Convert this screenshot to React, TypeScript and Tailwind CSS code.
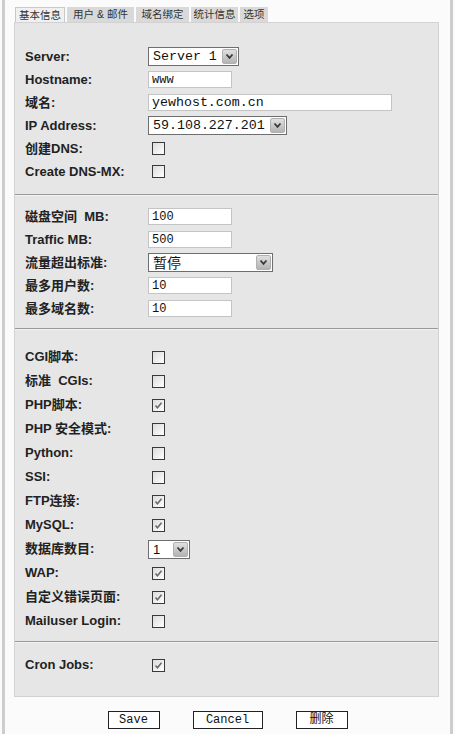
import React from "react"

const sans = "font-['Liberation_Sans','Noto_Sans_CJK_SC',sans-serif]"
const mono = "font-['Liberation_Mono','Noto_Sans_CJK_SC',monospace]"

const tabs: [string, string][] = [
  ["基本信息", "w-[50px]"],
  ["用户 & 邮件", "w-[67px]"],
  ["域名绑定", "w-[53px]"],
  ["统计信息", "w-[47px]"],
  ["选项", "w-[28px]"],
]

function Checkbox({ checked }: { checked?: boolean }) {
  return (
    <div className="ml-[4px] flex h-[13px] w-[13px] items-center justify-center border border-[#3a3a3a] bg-gradient-to-br from-[#dcdcdc] to-white">
      {checked && (
        <svg width="9" height="9" viewBox="0 0 9 9">
          <path d="M1.5 4.5 L3.5 6.8 L7.5 1.8" fill="none" stroke="#6a6a6a" strokeWidth="1.6" />
        </svg>
      )}
    </div>
  )
}

function Arrow() {
  return (
    <div className="flex h-[15px] w-[15px] items-center justify-center rounded-[2px] border border-[#b0b0b0] bg-gradient-to-b from-[#e0e0e0] to-[#b4b4b4]">
      <svg width="9" height="7" viewBox="0 0 9 7">
        <path d="M1.5 1.5 L4.5 4.8 L7.5 1.5" fill="none" stroke="#3a3a3a" strokeWidth="1.8" />
      </svg>
    </div>
  )
}

function Select({ value, width, textClass }: { value: string; width: string; textClass: string }) {
  return (
    <div className={`flex h-[19px] items-center justify-between border border-[#6e6e6e] bg-white pl-[4px] pr-[1px] ${width}`}>
      <span className={`leading-none text-[#111] ${textClass}`}>{value}</span>
      <Arrow />
    </div>
  )
}

function TextInput({ value, width, textClass }: { value: string; width: string; textClass: string }) {
  return (
    <div className={`flex h-[17px] items-center border border-[#c4c4c4] bg-white pl-[3px] ${width}`}>
      <span className={`leading-none text-[#111] ${textClass}`}>{value}</span>
    </div>
  )
}

function Row({ label, h, children }: { label: string; h: string; children: React.ReactNode }) {
  return (
    <div className={`flex items-center ${h}`}>
      <div className={`w-[123px] whitespace-pre text-[13px] font-bold text-[#222] ${sans}`}>{label}</div>
      {children}
    </div>
  )
}

const scripts: [string, boolean][] = [
  ["CGI脚本:", false],
  ["标准  CGIs:", false],
  ["PHP脚本:", true],
  ["PHP 安全模式:", false],
  ["Python:", false],
  ["SSI:", false],
  ["FTP连接:", true],
  ["MySQL:", true],
]

const extras: [string, boolean][] = [
  ["WAP:", true],
  ["自定义错误页面:", true],
  ["Mailuser Login:", false],
]

export default function App() {
  return (
    <div className="h-[734px] w-[455px] bg-[#fbfbfb]">
      <div className="ml-[2px] h-full w-[451px] border-x-[3px] border-[#cdcdcd] pl-[9px]">
        <div className="flex gap-[2px] pl-[1px] pt-[7px]">
          {tabs.map(([t, w], i) => (
            <div
              key={t}
              className={`flex h-[15px] items-center justify-center text-[10.5px] leading-none text-[#333] ${w} ${sans} ${
                i === 0 ? "border-x border-t border-[#c8c8c8] bg-[#f0f0f0]" : "bg-[#d9d9d9]"
              }`}
            >
              {t}
            </div>
          ))}
        </div>

        <div className="h-[675px] w-[425px] border border-[#d2d2d2] bg-[#e6e6e6] pl-[10px] pt-[22px]">
          <Row label="Server:" h="h-[23px]">
            <Select value="Server 1" width="w-[91px]" textClass={`text-[13.3px] ${mono}`} />
          </Row>
          <Row label="Hostname:" h="h-[23px]">
            <TextInput value="www" width="w-[84px]" textClass={`text-[12px] ${mono}`} />
          </Row>
          <Row label="域名:" h="h-[23px]">
            <TextInput value="yewhost.com.cn" width="w-[244px]" textClass={`text-[13.3px] ${mono}`} />
          </Row>
          <Row label="IP Address:" h="h-[23px]">
            <Select value="59.108.227.201" width="w-[139px]" textClass={`text-[13.3px] ${mono}`} />
          </Row>
          <Row label="创建DNS:" h="h-[23px]">
            <Checkbox />
          </Row>
          <Row label="Create DNS-MX:" h="h-[23px]">
            <Checkbox />
          </Row>

          <div className="-ml-[10px] mt-[11px] mb-[9px] h-[2px] w-[423px] border-t border-b border-t-[#9a9a9a] border-b-[#f2f2f2]" />

          <Row label="磁盘空间  MB:" h="h-[23px]">
            <TextInput value="100" width="w-[84px]" textClass={`text-[12px] ${mono}`} />
          </Row>
          <Row label="Traffic MB:" h="h-[23px]">
            <TextInput value="500" width="w-[84px]" textClass={`text-[12px] ${mono}`} />
          </Row>
          <Row label="流量超出标准:" h="h-[23px]">
            <Select value="暂停" width="w-[125px]" textClass={`text-[14px] ${sans}`} />
          </Row>
          <Row label="最多用户数:" h="h-[23px]">
            <TextInput value="10" width="w-[84px]" textClass={`text-[12px] ${mono}`} />
          </Row>
          <Row label="最多域名数:" h="h-[23px]">
            <TextInput value="10" width="w-[84px]" textClass={`text-[12px] ${mono}`} />
          </Row>

          <div className="-ml-[10px] mt-[8px] mb-[15px] h-[2px] w-[423px] border-t border-b border-t-[#9a9a9a] border-b-[#f2f2f2]" />

          {scripts.map(([l, c]) => (
            <Row key={l} label={l} h="h-[24px]">
              <Checkbox checked={c} />
            </Row>
          ))}
          <Row label="数据库数目:" h="h-[24px]">
            <Select value="1" width="w-[42px]" textClass={`text-[13px] ${sans}`} />
          </Row>
          {extras.map(([l, c]) => (
            <Row key={l} label={l} h="h-[24px]">
              <Checkbox checked={c} />
            </Row>
          ))}

          <div className="-ml-[10px] mt-[8px] mb-[10px] h-[2px] w-[423px] border-t border-b border-t-[#9a9a9a] border-b-[#f2f2f2]" />

          <Row label="Cron Jobs:" h="h-[24px]">
            <Checkbox checked />
          </Row>
        </div>

        <div className={`mt-[14px] flex justify-center gap-[33px] pr-[9px] text-[12px] ${mono}`}>
          <button className="h-[18px] w-[52px] border border-[#222] bg-white leading-none text-[#111]">Save</button>
          <button className="h-[18px] w-[70px] border border-[#222] bg-white leading-none text-[#111]">Cancel</button>
          <button className="h-[18px] w-[52px] border border-[#222] bg-white leading-none text-[#111]">删除</button>
        </div>
      </div>
    </div>
  )
}
